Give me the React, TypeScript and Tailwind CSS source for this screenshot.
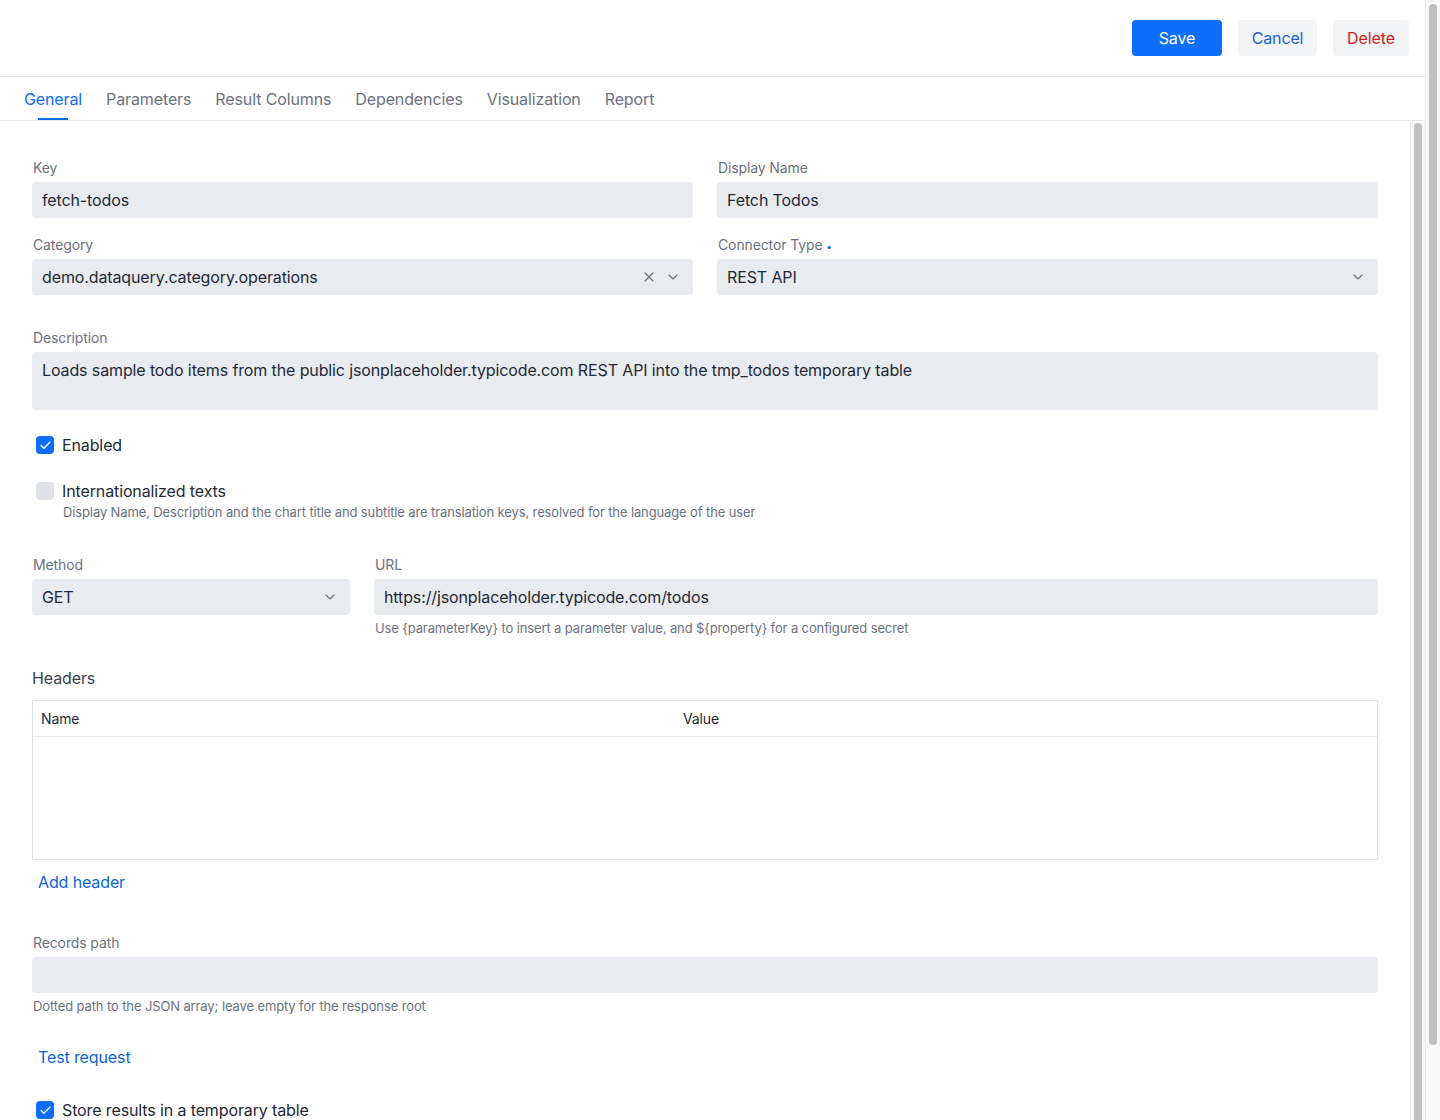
import { ChevronDown, X, Check } from 'lucide-react';

const tabs = ['General', 'Parameters', 'Result Columns', 'Dependencies', 'Visualization', 'Report'];

function Label({ children }: { children: React.ReactNode }) {
  return <div className="h-5 text-sm leading-5 text-[#6b7280] mb-1 pl-px">{children}</div>;
}

function TextInput({ value }: { value?: string }) {
  return (
    <div className="h-9 rounded bg-[#e8ebf0] px-[10px] flex items-center text-base text-[#1f2937]">
      {value}
    </div>
  );
}

function Select({ value, clearable }: { value: string; clearable?: boolean }) {
  return (
    <div className="h-9 rounded bg-[#e8ebf0] pl-[10px] pr-3 flex items-center text-base text-[#1f2937]">
      <span className="flex-1">{value}</span>
      {clearable && <X size={16} strokeWidth={1.75} className="text-[#6b7280] mr-2" />}
      <ChevronDown size={16} strokeWidth={1.75} className="text-[#6b7280]" />
    </div>
  );
}

function Checkbox({ checked }: { checked?: boolean }) {
  return checked ? (
    <div className="w-[18px] h-[18px] rounded bg-[#0d6efd] flex items-center justify-center">
      <Check size={13} strokeWidth={2.5} className="text-white" />
    </div>
  ) : (
    <div className="w-[18px] h-[18px] rounded bg-[#dfe2e7]" />
  );
}

export default function App() {
  return (
    <div
      className="h-[1120px] w-[1440px] flex overflow-hidden bg-white text-[#1f2937] tracking-[-0.12px]"
      style={{ fontFamily: 'Inter, "Noto Sans", sans-serif' }}
    >
      <div className="w-[1425px] flex flex-col">
        {/* Toolbar */}
        <div className="h-[77px] shrink-0 border-b border-[#e5e7eb] flex items-center justify-end gap-4 pr-4">
          <button className="h-9 w-[90px] rounded bg-[#0d6efd] text-white text-base">Save</button>
          <button className="h-9 w-[79px] rounded bg-[#f3f4f6] text-[#1a62d4] text-base">Cancel</button>
          <button className="h-9 w-[76px] rounded bg-[#f3f4f6] text-[#c81e1e] text-base">Delete</button>
        </div>

        {/* Tabs */}
        <div className="h-[44px] shrink-0 border-b border-[#e5e7eb] flex items-stretch gap-6 px-6">
          {tabs.map((t, i) => (
            <div key={t} className="relative flex items-center">
              <span className={i === 0 ? 'text-base text-[#0d6efd]' : 'text-base text-[#6b7280]'}>{t}</span>
              {i === 0 && <div className="absolute bottom-0 left-1/2 -translate-x-1/2 w-[30px] h-[2px] bg-[#0d6efd]" />}
            </div>
          ))}
        </div>

        <div className="flex-1 flex min-h-0">
          {/* Form */}
          <div className="w-[1410px] overflow-hidden px-8 pt-[37px] pb-10">
            <div className="grid grid-cols-2 gap-x-6 gap-y-[17px]">
              <div>
                <Label>Key</Label>
                <TextInput value="fetch-todos" />
              </div>
              <div>
                <Label>Display Name</Label>
                <TextInput value="Fetch Todos" />
              </div>
              <div>
                <Label>Category</Label>
                <Select value="demo.dataquery.category.operations" clearable />
              </div>
              <div>
                <Label>
                  Connector Type <span className="text-[#0d6efd] text-[10px] leading-none align-middle">•</span>
                </Label>
                <Select value="REST API" />
              </div>
            </div>

            <div className="mt-[33px]">
              <Label>Description</Label>
              <div className="h-[58px] rounded bg-[#e8ebf0] px-[10px] pt-1.5 text-base leading-6">
                Loads sample todo items from the public jsonplaceholder.typicode.com REST API into the tmp_todos temporary table
              </div>
            </div>

            <div className="mt-[23px] h-6 flex items-center gap-2 pl-1">
              <Checkbox checked />
              <span className="text-base">Enabled</span>
            </div>

            <div className="mt-[22px]">
              <div className="h-6 flex items-center gap-2 pl-1">
                <Checkbox />
                <span className="text-base">Internationalized texts</span>
              </div>
              <div className="mt-px pl-[31px] text-[13px] leading-4 text-[#6b7280]">
                Display Name, Description and the chart title and subtitle are translation keys, resolved for the language of the user
              </div>
            </div>

            <div className="mt-[35px] grid grid-cols-[318px_1fr] gap-x-6">
              <div>
                <Label>Method</Label>
                <Select value="GET" />
              </div>
              <div>
                <Label>URL</Label>
                <TextInput value="https://jsonplaceholder.typicode.com/todos" />
                <div className="mt-1 text-[13px] leading-[18px] text-[#6b7280] pl-px">
                  Use {'{parameterKey}'} to insert a parameter value, and ${'{property}'} for a configured secret
                </div>
              </div>
            </div>

            <div className="mt-[29px] text-base leading-6 text-[#374151]">Headers</div>
            <div className="mt-[10px] h-[160px] border border-[#dcdfe4]">
              <div className="h-9 border-b border-[#e5e7eb] flex items-center text-sm text-[#1f2937]">
                <div className="w-[642px] pl-2">Name</div>
                <div className="pl-2">Value</div>
              </div>
            </div>
            <div className="mt-[10px] ml-1.5 text-base leading-6 text-[#0b64d8]">Add header</div>

            <div className="mt-[39px]">
              <Label>Records path</Label>
              <TextInput />
              <div className="mt-1 text-[13px] leading-[18px] text-[#6b7280] pl-px">
                Dotted path to the JSON array; leave empty for the response root
              </div>
            </div>

            <div className="mt-[30px] ml-1.5 text-base leading-6 text-[#0b64d8]">Test request</div>

            <div className="mt-[29px] h-6 flex items-center gap-2 pl-1">
              <Checkbox checked />
              <span className="text-base">Store results in a temporary table</span>
            </div>
          </div>

          {/* inner scrollbar */}
          <div className="w-[15px] shrink-0 bg-[#f8f8f8] border-l border-[#e8e8e8] pt-[2px] pl-[3px]">
            <div className="w-[8px] h-[1100px] rounded-full bg-[#c1c1c1]" />
          </div>
        </div>
      </div>

      {/* page scrollbar */}
      <div className="w-[15px] shrink-0 bg-[#f8f8f8] border-l border-[#e8e8e8] pt-[4px] pl-[3px]">
        <div className="w-[8px] h-[1041px] rounded-full bg-[#c1c1c1]" />
      </div>
    </div>
  );
}
